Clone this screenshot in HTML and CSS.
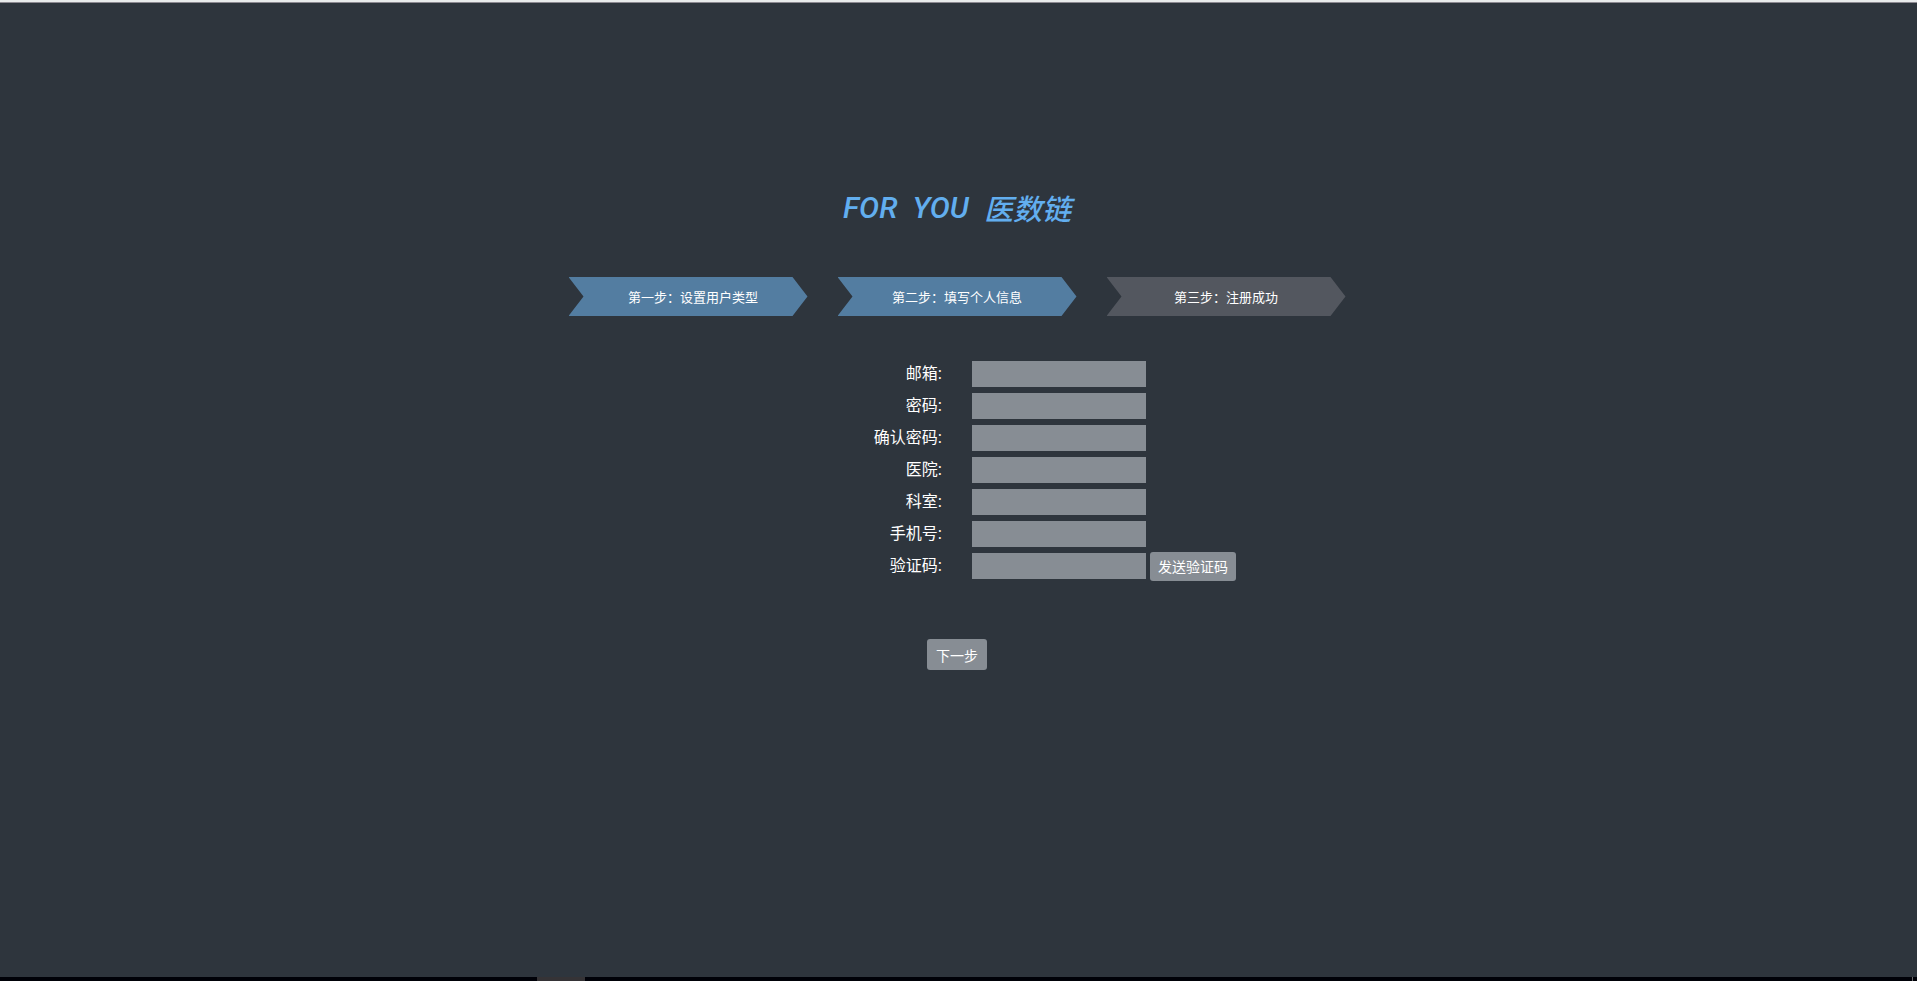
FILE: index.html
```html
<!DOCTYPE html>
<html lang="zh-CN">
<head>
<meta charset="utf-8">
<title>FOR YOU 医数链</title>
<link rel="stylesheet" href="styles.css">
</head>
<body>
<div class="topbar"></div>
<main class="page">
  <h1 class="logo"><span>FOR</span><span>YOU</span><span class="logo-cn">医数链</span></h1>
  <ol class="steps">
    <li class="step done first">第一步：设置用户类型</li>
    <li class="step done">第二步：填写个人信息</li>
    <li class="step">第三步：注册成功</li>
  </ol>
  <form class="form">
    <div class="row"><label for="email">邮箱:</label><div class="field"><input id="email" type="email"></div></div>
    <div class="row"><label for="password">密码:</label><div class="field"><input id="password" type="password"></div></div>
    <div class="row"><label for="confirm">确认密码:</label><div class="field"><input id="confirm" type="password"></div></div>
    <div class="row"><label for="hospital">医院:</label><div class="field"><input id="hospital" type="text"></div></div>
    <div class="row"><label for="department">科室:</label><div class="field"><input id="department" type="text"></div></div>
    <div class="row"><label for="phone">手机号:</label><div class="field"><input id="phone" type="tel"></div></div>
    <div class="row"><label for="code">验证码:</label><div class="field"><input id="code" type="text"><button class="btn send" type="button">发送验证码</button></div></div>
    <button class="btn next" type="submit">下一步</button>
  </form>
</main>
<footer class="bottombar"><span class="tab"></span><span class="edge"></span></footer>
</body>
</html>
```
FILE: styles.css
```css
* {
  box-sizing: border-box;
}

body {
  margin: 0;
  min-height: 100vh;
  display: flex;
  flex-direction: column;
  background: #2e353d;
  color: #fff;
  font-family: "Open Sans", "Noto Sans CJK SC", sans-serif;
}

.topbar {
  height: 3px;
  background: #e9ebec;
  border-bottom: 1px solid #8d8a92;
}

.page {
  flex: 1;
  display: flex;
  flex-direction: column;
  align-items: center;
  padding: 185px 3px 0 0;
}

.logo {
  display: flex;
  align-items: center;
  gap: 15px;
  height: 40px;
  margin: 0 0 49px;
  color: #62aeef;
  font: italic 500 30px/40px Roboto, "Noto Sans CJK SC", sans-serif;
}

.logo-cn {
  padding-top: 4px;
  font-size: 29px;
}

.steps {
  display: flex;
  gap: 30px;
  margin: 0;
  padding: 0;
  list-style: none;
}

.step {
  width: 239px;
  height: 39px;
  background: #53575f;
  clip-path: polygon(0 0, 224px 0, 100% 50%, 224px 100%, 0 100%, 15px 50%);
  font-family: "Noto Sans CJK SC", sans-serif;
  font-size: 13px;
  line-height: 40px;
  text-align: center;
}

.done {
  background: #537da1;
}

.first {
  padding-left: 10px;
}

.form {
  align-self: stretch;
  display: flex;
  flex-direction: column;
  align-items: center;
  padding-top: 42px;
}

.row {
  align-self: stretch;
  display: grid;
  grid-template-columns: 1fr 1fr;
  align-items: center;
  gap: 30px;
  height: 32px;
}

.row label {
  font-size: 16px;
  line-height: 24px;
  padding-bottom: 2px;
  text-align: right;
}

.field {
  display: flex;
  align-items: center;
  gap: 4px;
}

.field input {
  width: 174px;
  height: 26px;
  padding: 0 4px;
  border: 0;
  background: #878d94;
  color: #fff;
  font: inherit;
}

.btn {
  padding: 0 8px;
  border: 0;
  border-radius: 3px;
  background: #878d94;
  color: #fff;
  font-family: "Noto Sans CJK SC", sans-serif;
  font-size: 14px;
  line-height: 20px;
}

.send {
  height: 29px;
}

.next {
  height: 31px;
  margin-top: 57px;
  padding: 0 9px;
}

.bottombar {
  display: flex;
  justify-content: space-between;
  height: 4px;
  padding: 0 4px 0 28%;
  background: #000108;
}

.tab {
  width: 48px;
  background: #353336;
}

.edge {
  width: 1px;
  background: #6a6a6c;
}
```
